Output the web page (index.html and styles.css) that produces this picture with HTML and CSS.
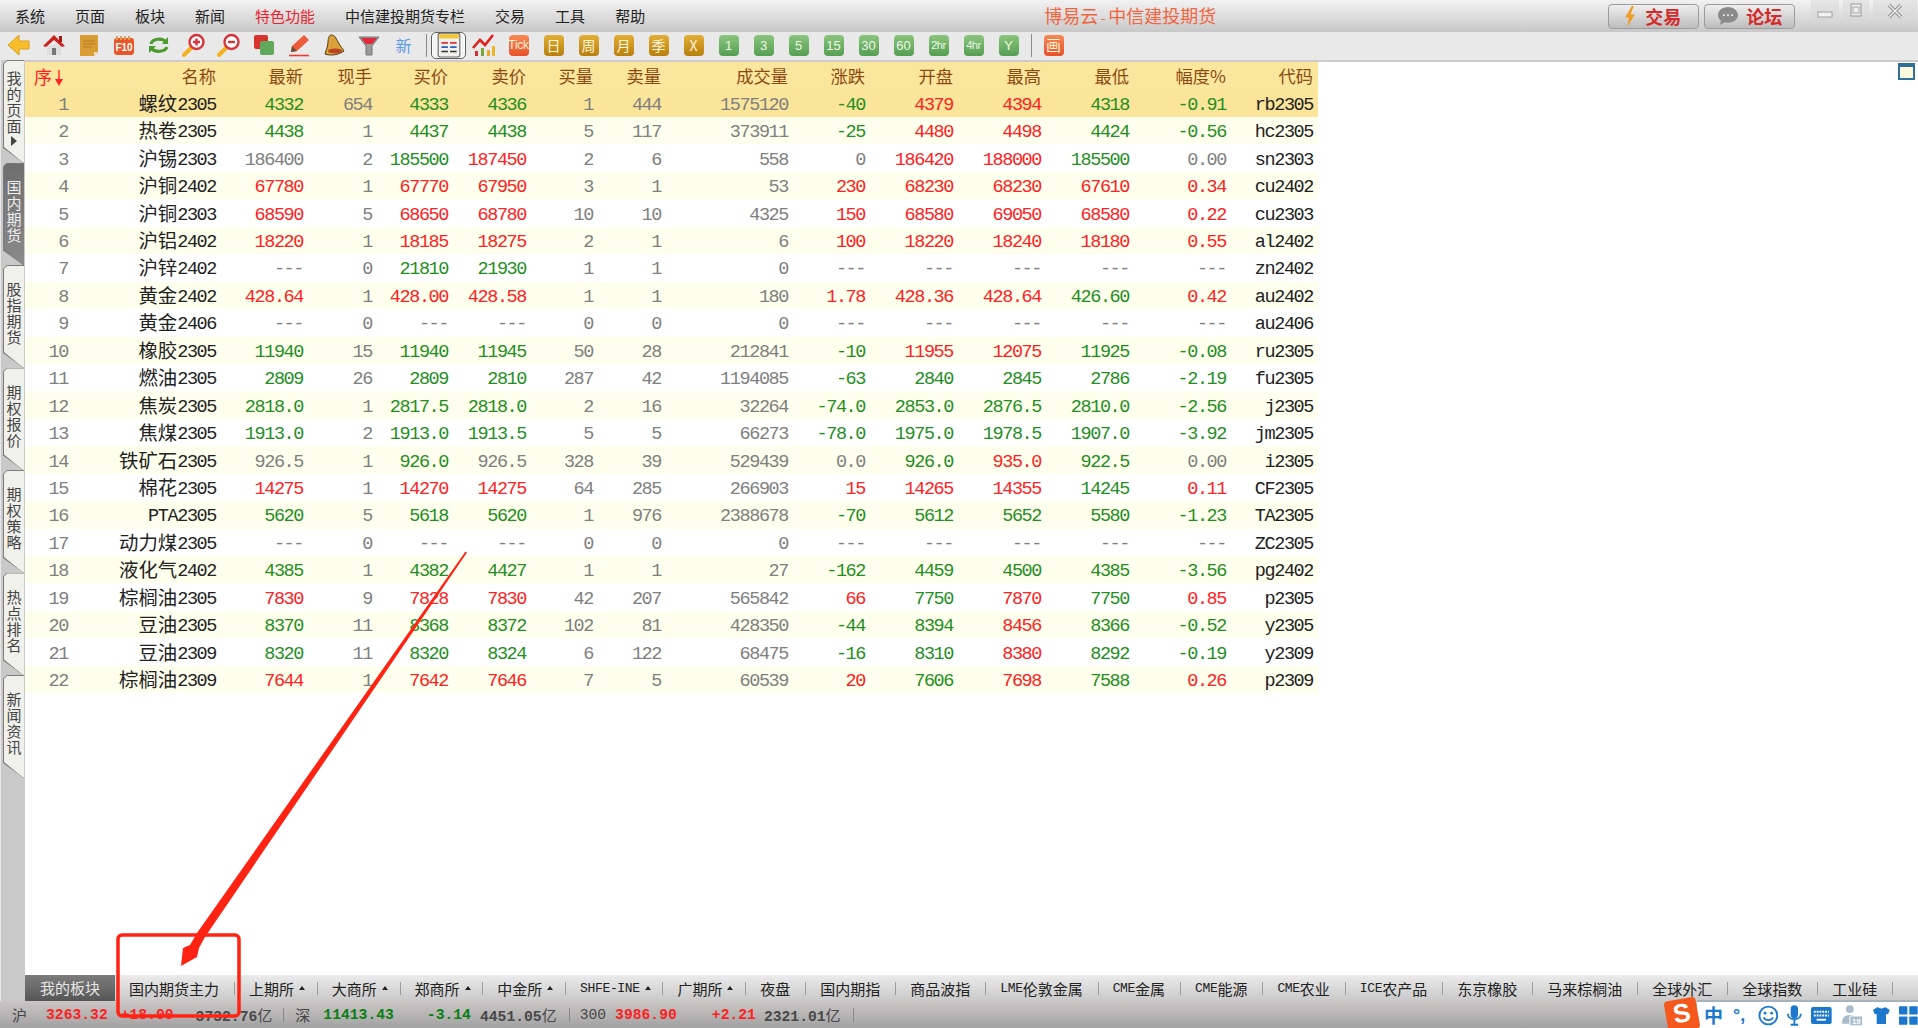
FILE: index.html
```html
<!DOCTYPE html>
<html lang="zh-CN">
<head>
<meta charset="utf-8">
<title>博易云-中信建投期货</title>
<link rel="stylesheet" href="styles.css">
</head>
<body>
<div class="app">
  <header class="titlebar">
    <nav class="menu">
      <span>系统</span><span>页面</span><span>板块</span><span>新闻</span><span class="hot">特色功能</span><span>中信建投期货专栏</span><span>交易</span><span>工具</span><span>帮助</span>
    </nav>
    <div class="apptitle">博易云<i>-</i>中信建投期货</div>
    <div class="topbtns">
      <div class="topbtn">
        <svg class="bolt" viewBox="0 0 12 22"><path d="M8 0 1 12h4l-2 10 8-13H6.500L10 0z" fill="#f09a20"/></svg>
        <span>交易</span>
      </div>
      <div class="topbtn">
        <svg class="bubble" viewBox="0 0 24 22"><path d="M12 1C5.900 1 1 4.900 1 10c0 2.600 1.300 4.800 3.300 6.300L3 21l5.200-3c1.200.3 2.500.5 3.800.5 6.100 0 11-3.900 11-8.500S18.100 1 12 1z" fill="#8a8a8a"/><circle cx="7.500" cy="10" r="1.300" fill="#ddd"/><circle cx="12" cy="10" r="1.300" fill="#ddd"/><circle cx="16.500" cy="10" r="1.300" fill="#ddd"/></svg>
        <span>论坛</span>
      </div>
    </div>
    <div class="winctl">
      <div class="wbtn w-min"><svg viewBox="0 0 16 8" width="16" height="8"><rect x="1" y="1" width="14" height="5" fill="#f2f2f2" stroke="#a0a0a0"/></svg></div>
      <div class="wbtn w-max"><svg viewBox="0 0 12 14" width="12" height="14"><rect x="1" y="1" width="10" height="12" fill="#eee" stroke="#999"/><rect x="3" y="4" width="6" height="6" fill="none" stroke="#aaa"/></svg></div>
      <div class="wbtn w-close"><svg viewBox="0 0 16 16" width="16" height="16"><path d="M2 2l12 12M14 2 2 14" stroke="#8f8f8f" stroke-width="3.400"/><path d="M2 2l12 12M14 2 2 14" stroke="#f2f2f2" stroke-width="1.400"/></svg></div>
    </div>
  </header>

  <div class="toolbar">
    <div class="tool"><svg viewBox="0 0 24 24" width="24" height="24"><path d="M1 12 12 2v6h10v8H12v6z" fill="#f7bd2b" stroke="#dca01c" stroke-linejoin="round"/></svg></div>
    <div class="tool"><svg viewBox="0 0 24 24" width="24" height="24"><path d="M5 12v10h14V12z" fill="#ddd"/><rect x="10" y="15" width="4" height="7" fill="#777"/><path d="M12 2 1 13l3 1 8-7 8 7 3-1z" fill="#c8231f"/><rect x="17" y="3" width="3" height="6" fill="#a81c18"/></svg></div>
    <div class="tool"><svg viewBox="0 0 24 24" width="24" height="24"><path d="M3 2h18v17l-4 4H3z" fill="#d99b33"/><path d="M6 8h12M6 11h12M6 14h9" stroke="#b97d20"/><path d="M21 19h-4v4z" fill="#f0dcae"/></svg></div>
    <div class="tool"><svg viewBox="0 0 24 24" width="24" height="24"><rect x="2" y="5" width="20" height="17" rx="3" fill="#e9562a"/><path d="M5 3v4M9 3v4M13 3v4M17 3v4" stroke="#d9a05a" stroke-width="2"/><text x="12" y="18" class="svgtxt">F10</text></svg></div>
    <div class="tool"><svg viewBox="0 0 24 24" width="24" height="24" fill="none" stroke="#4c9b2c" stroke-width="3.200"><path d="M4 11c1-5 11-7 15-2"/><path d="M20 14c-2 5-12 6-16 1"/><path d="M21 4v7h-6z" fill="#4c9b2c" stroke="none"/><path d="M2 20v-7h7z" fill="#4c9b2c" stroke="none"/></svg></div>
    <div class="tool"><svg viewBox="0 0 24 24" width="24" height="24"><path d="M9 15 2 22" stroke="#f2b31f" stroke-width="4" stroke-linecap="round"/><circle cx="14.500" cy="9" r="7" fill="#fff" stroke="#d8343a" stroke-width="2.400"/><path d="M11 9h7M14.500 5.500v7" stroke="#d8343a" stroke-width="2.400"/></svg></div>
    <div class="tool"><svg viewBox="0 0 24 24" width="24" height="24"><path d="M9 15 2 22" stroke="#f2b31f" stroke-width="4" stroke-linecap="round"/><circle cx="14.500" cy="9" r="7" fill="#fff" stroke="#d8343a" stroke-width="2.400"/><path d="M11 9h7" stroke="#d8343a" stroke-width="2.400"/></svg></div>
    <div class="tool"><svg viewBox="0 0 24 24" width="24" height="24"><rect x="2" y="2" width="14" height="14" rx="2" fill="#d8322c"/><rect x="8" y="8" width="14" height="14" rx="2" fill="#62a85c"/></svg></div>
    <div class="tool"><svg viewBox="0 0 24 24" width="24" height="24"><path d="M17 2l5 5-12 11-6 1 1-6z" fill="#ee5d3a"/><path d="M5 13l5 5-6 1z" fill="#6a4a3a"/><path d="M2 22.500h20" stroke="#e63a32" stroke-width="1.600"/></svg></div>
    <div class="tool"><svg viewBox="0 0 24 24" width="24" height="24"><path d="M9 2c4 0 5 3 7 7s5 7 6 9c-5 4-14 5-19 3 1-4 3-8 3-12 0-3 1-7 3-7z" fill="#d9a13a" stroke="#5a3a1a"/><ellipse cx="13" cy="18" rx="7" ry="2.600" fill="#b9431e"/></svg></div>
    <div class="tool"><svg viewBox="0 0 24 24" width="24" height="24"><path d="M2 4h20l-7 9v9H9v-9z" fill="#9a9a9a" stroke="#777"/><path d="M4 5h16l-5 6H9z" fill="#e2283c"/></svg></div>
    <div class="tool t-new">新</div>
    <div class="tsep"></div>
    <div class="tool tool-on"><svg viewBox="0 0 24 24" width="26" height="26"><rect x="2" y="1" width="20" height="22" rx="2" fill="#f2f0ec" stroke="#666"/><rect x="3" y="2" width="18" height="4" fill="#f2c638"/><path d="M5 10h6M13 10h6" stroke="#d33" stroke-width="1.500"/><path d="M5 14h6M13 14h6" stroke="#2a62b8" stroke-width="1.500"/><path d="M5 18h6M13 18h6" stroke="#333" stroke-width="1.500"/></svg></div>
    <div class="tool"><svg viewBox="0 0 24 24" width="24" height="24"><rect x="3" y="18" width="3" height="5" fill="#c33"/><rect x="9" y="15" width="3" height="8" fill="#7aa83a"/><rect x="15" y="17" width="3" height="6" fill="#e8a92a"/><rect x="20" y="13" width="3" height="10" fill="#e8b92a"/><path d="M1 15 8 7l5 5 8-10" fill="none" stroke="#df2020" stroke-width="2.600"/></svg></div>
    <div class="tool"><b class="ib ib-red">Tick</b></div>
    <div class="tool"><b class="ib ib-gold">日</b></div>
    <div class="tool"><b class="ib ib-gold">周</b></div>
    <div class="tool"><b class="ib ib-gold">月</b></div>
    <div class="tool"><b class="ib ib-gold">季</b></div>
    <div class="tool"><b class="ib ib-gold">X</b></div>
    <div class="tool"><b class="ib ib-green">1</b></div>
    <div class="tool"><b class="ib ib-green">3</b></div>
    <div class="tool"><b class="ib ib-green">5</b></div>
    <div class="tool"><b class="ib ib-green">15</b></div>
    <div class="tool"><b class="ib ib-green">30</b></div>
    <div class="tool"><b class="ib ib-green">60</b></div>
    <div class="tool"><b class="ib ib-green ib-nar">2hr</b></div>
    <div class="tool"><b class="ib ib-green ib-nar">4hr</b></div>
    <div class="tool"><b class="ib ib-green">Y</b></div>
    <div class="tsep"></div>
    <div class="tool"><b class="ib ib-red ib-hua">画</b></div>
  </div>

  <div class="workspace">
    <aside class="side">
      <div class="vtab"><div class="vtab-in"><span>我的页面</span><i class="vtri"></i></div></div>
      <div class="vtab on"><div class="vtab-in"><span>国内期货</span></div></div>
      <div class="vtab"><div class="vtab-in"><span>股指期货</span></div></div>
      <div class="vtab"><div class="vtab-in"><span>期权报价</span></div></div>
      <div class="vtab"><div class="vtab-in"><span>期权策略</span></div></div>
      <div class="vtab"><div class="vtab-in"><span>热点排名</span></div></div>
      <div class="vtab"><div class="vtab-in"><span>新闻资讯</span></div></div>
    </aside>
    <section class="main">
      <div class="gridarea">
        <table class="quotes">
          <colgroup><col class="c1"><col class="c2"><col class="c3"><col class="c4"><col class="c5"><col class="c6"><col class="c7"><col class="c8"><col class="c9"><col class="c10"><col class="c11"><col class="c12"><col class="c13"><col class="c14"><col class="c15"></colgroup>
          <thead>
            <tr><th class="seq">序<svg class="sortarrow" viewBox="0 0 8 16" width="8" height="16"><path d="M4 0v11" stroke="#f22" stroke-width="1.400"/><path d="M0 9h8l-4 7z" fill="#f22"/></svg></th><th>名称</th><th>最新</th><th>现手</th><th>买价</th><th>卖价</th><th>买量</th><th>卖量</th><th>成交量</th><th>涨跌</th><th>开盘</th><th>最高</th><th>最低</th><th>幅度%</th><th class="lastc">代码</th></tr>
          </thead>
          <tbody>
            <tr class="sel"><td>1</td><td class="k"><i>螺纹</i>2305</td><td class="d">4332</td><td>654</td><td class="d">4333</td><td class="d">4336</td><td>1</td><td>444</td><td>1575120</td><td class="d">-40</td><td class="u">4379</td><td class="u">4394</td><td class="d">4318</td><td class="d">-0.91</td><td class="k lastc">rb2305</td></tr>
            <tr><td>2</td><td class="k"><i>热卷</i>2305</td><td class="d">4438</td><td>1</td><td class="d">4437</td><td class="d">4438</td><td>5</td><td>117</td><td>373911</td><td class="d">-25</td><td class="u">4480</td><td class="u">4498</td><td class="d">4424</td><td class="d">-0.56</td><td class="k lastc">hc2305</td></tr>
            <tr><td>3</td><td class="k"><i>沪锡</i>2303</td><td>186400</td><td>2</td><td class="d">185500</td><td class="u">187450</td><td>2</td><td>6</td><td>558</td><td>0</td><td class="u">186420</td><td class="u">188000</td><td class="d">185500</td><td>0.00</td><td class="k lastc">sn2303</td></tr>
            <tr><td>4</td><td class="k"><i>沪铜</i>2402</td><td class="u">67780</td><td>1</td><td class="u">67770</td><td class="u">67950</td><td>3</td><td>1</td><td>53</td><td class="u">230</td><td class="u">68230</td><td class="u">68230</td><td class="u">67610</td><td class="u">0.34</td><td class="k lastc">cu2402</td></tr>
            <tr><td>5</td><td class="k"><i>沪铜</i>2303</td><td class="u">68590</td><td>5</td><td class="u">68650</td><td class="u">68780</td><td>10</td><td>10</td><td>4325</td><td class="u">150</td><td class="u">68580</td><td class="u">69050</td><td class="u">68580</td><td class="u">0.22</td><td class="k lastc">cu2303</td></tr>
            <tr><td>6</td><td class="k"><i>沪铝</i>2402</td><td class="u">18220</td><td>1</td><td class="u">18185</td><td class="u">18275</td><td>2</td><td>1</td><td>6</td><td class="u">100</td><td class="u">18220</td><td class="u">18240</td><td class="u">18180</td><td class="u">0.55</td><td class="k lastc">al2402</td></tr>
            <tr><td>7</td><td class="k"><i>沪锌</i>2402</td><td>---</td><td>0</td><td class="d">21810</td><td class="d">21930</td><td>1</td><td>1</td><td>0</td><td>---</td><td>---</td><td>---</td><td>---</td><td>---</td><td class="k lastc">zn2402</td></tr>
            <tr><td>8</td><td class="k"><i>黄金</i>2402</td><td class="u">428.64</td><td>1</td><td class="u">428.00</td><td class="u">428.58</td><td>1</td><td>1</td><td>180</td><td class="u">1.78</td><td class="u">428.36</td><td class="u">428.64</td><td class="d">426.60</td><td class="u">0.42</td><td class="k lastc">au2402</td></tr>
            <tr><td>9</td><td class="k"><i>黄金</i>2406</td><td>---</td><td>0</td><td>---</td><td>---</td><td>0</td><td>0</td><td>0</td><td>---</td><td>---</td><td>---</td><td>---</td><td>---</td><td class="k lastc">au2406</td></tr>
            <tr><td>10</td><td class="k"><i>橡胶</i>2305</td><td class="d">11940</td><td>15</td><td class="d">11940</td><td class="d">11945</td><td>50</td><td>28</td><td>212841</td><td class="d">-10</td><td class="u">11955</td><td class="u">12075</td><td class="d">11925</td><td class="d">-0.08</td><td class="k lastc">ru2305</td></tr>
            <tr><td>11</td><td class="k"><i>燃油</i>2305</td><td class="d">2809</td><td>26</td><td class="d">2809</td><td class="d">2810</td><td>287</td><td>42</td><td>1194085</td><td class="d">-63</td><td class="d">2840</td><td class="d">2845</td><td class="d">2786</td><td class="d">-2.19</td><td class="k lastc">fu2305</td></tr>
            <tr><td>12</td><td class="k"><i>焦炭</i>2305</td><td class="d">2818.0</td><td>1</td><td class="d">2817.5</td><td class="d">2818.0</td><td>2</td><td>16</td><td>32264</td><td class="d">-74.0</td><td class="d">2853.0</td><td class="d">2876.5</td><td class="d">2810.0</td><td class="d">-2.56</td><td class="k lastc">j2305</td></tr>
            <tr><td>13</td><td class="k"><i>焦煤</i>2305</td><td class="d">1913.0</td><td>2</td><td class="d">1913.0</td><td class="d">1913.5</td><td>5</td><td>5</td><td>66273</td><td class="d">-78.0</td><td class="d">1975.0</td><td class="d">1978.5</td><td class="d">1907.0</td><td class="d">-3.92</td><td class="k lastc">jm2305</td></tr>
            <tr><td>14</td><td class="k"><i>铁矿石</i>2305</td><td>926.5</td><td>1</td><td class="d">926.0</td><td>926.5</td><td>328</td><td>39</td><td>529439</td><td>0.0</td><td class="d">926.0</td><td class="u">935.0</td><td class="d">922.5</td><td>0.00</td><td class="k lastc">i2305</td></tr>
            <tr><td>15</td><td class="k"><i>棉花</i>2305</td><td class="u">14275</td><td>1</td><td class="u">14270</td><td class="u">14275</td><td>64</td><td>285</td><td>266903</td><td class="u">15</td><td class="u">14265</td><td class="u">14355</td><td class="d">14245</td><td class="u">0.11</td><td class="k lastc">CF2305</td></tr>
            <tr><td>16</td><td class="k">PTA2305</td><td class="d">5620</td><td>5</td><td class="d">5618</td><td class="d">5620</td><td>1</td><td>976</td><td>2388678</td><td class="d">-70</td><td class="d">5612</td><td class="d">5652</td><td class="d">5580</td><td class="d">-1.23</td><td class="k lastc">TA2305</td></tr>
            <tr><td>17</td><td class="k"><i>动力煤</i>2305</td><td>---</td><td>0</td><td>---</td><td>---</td><td>0</td><td>0</td><td>0</td><td>---</td><td>---</td><td>---</td><td>---</td><td>---</td><td class="k lastc">ZC2305</td></tr>
            <tr><td>18</td><td class="k"><i>液化气</i>2402</td><td class="d">4385</td><td>1</td><td class="d">4382</td><td class="d">4427</td><td>1</td><td>1</td><td>27</td><td class="d">-162</td><td class="d">4459</td><td class="d">4500</td><td class="d">4385</td><td class="d">-3.56</td><td class="k lastc">pg2402</td></tr>
            <tr><td>19</td><td class="k"><i>棕榈油</i>2305</td><td class="u">7830</td><td>9</td><td class="u">7828</td><td class="u">7830</td><td>42</td><td>207</td><td>565842</td><td class="u">66</td><td class="d">7750</td><td class="u">7870</td><td class="d">7750</td><td class="u">0.85</td><td class="k lastc">p2305</td></tr>
            <tr><td>20</td><td class="k"><i>豆油</i>2305</td><td class="d">8370</td><td>11</td><td class="d">8368</td><td class="d">8372</td><td>102</td><td>81</td><td>428350</td><td class="d">-44</td><td class="d">8394</td><td class="u">8456</td><td class="d">8366</td><td class="d">-0.52</td><td class="k lastc">y2305</td></tr>
            <tr><td>21</td><td class="k"><i>豆油</i>2309</td><td class="d">8320</td><td>11</td><td class="d">8320</td><td class="d">8324</td><td>6</td><td>122</td><td>68475</td><td class="d">-16</td><td class="d">8310</td><td class="u">8380</td><td class="d">8292</td><td class="d">-0.19</td><td class="k lastc">y2309</td></tr>
            <tr><td>22</td><td class="k"><i>棕榈油</i>2309</td><td class="u">7644</td><td>1</td><td class="u">7642</td><td class="u">7646</td><td>7</td><td>5</td><td>60539</td><td class="u">20</td><td class="d">7606</td><td class="u">7698</td><td class="d">7588</td><td class="u">0.26</td><td class="k lastc">p2309</td></tr>
          </tbody>
        </table>
        <div class="restore"></div>
      </div>
      <nav class="sheets">
        <div class="sheet-my">我的板块</div>
        <div class="sheet">国内期货主力</div>
        <div class="sheet tri">上期所</div>
        <div class="sheet tri">大商所</div>
        <div class="sheet tri">郑商所</div>
        <div class="sheet tri">中金所</div>
        <div class="sheet tri"><em>SHFE-INE</em></div>
        <div class="sheet tri">广期所</div>
        <div class="sheet">夜盘</div>
        <div class="sheet">国内期指</div>
        <div class="sheet">商品波指</div>
        <div class="sheet"><em>LME</em>伦敦金属</div>
        <div class="sheet"><em>CME</em>金属</div>
        <div class="sheet"><em>CME</em>能源</div>
        <div class="sheet"><em>CME</em>农业</div>
        <div class="sheet"><em>ICE</em>农产品</div>
        <div class="sheet">东京橡胶</div>
        <div class="sheet">马来棕榈油</div>
        <div class="sheet">全球外汇</div>
        <div class="sheet">全球指数</div>
        <div class="sheet">工业硅</div>
      </nav>
    </section>
  </div>

  <footer class="status">
    <span class="ix cn">沪</span>
    <span class="u m19">3263.32</span>
    <span class="u m13">+18.00</span>
    <span class="g m22">3732.76<i>亿</i></span>
    <b class="ssep m11"></b>
    <span class="ix cn m11">深</span>
    <span class="dg m13">11413.43</span>
    <span class="dg m33">-3.14</span>
    <span class="g m9">4451.05<i>亿</i></span>
    <b class="ssep m12"></b>
    <span class="g m10 plain">300</span>
    <span class="u m9">3986.90</span>
    <span class="u m35">+2.21</span>
    <span class="g m8">2321.01<i>亿</i></span>
    <b class="ssep m12"></b>
  </footer>

  <div class="ime">
    <div class="ime-logo">S</div>
    <span class="ime-zh">中</span>
    <span class="ime-punc">°,</span>
    <svg viewBox="0 0 22 22" width="21" height="21"><circle cx="11" cy="11" r="9.500" fill="#fff" stroke="#1b78cc" stroke-width="2"/><circle cx="7.500" cy="8.500" r="1.500" fill="#1b78cc"/><circle cx="14.500" cy="8.500" r="1.500" fill="#1b78cc"/><path d="M6 13c2 4 8 4 10 0" fill="none" stroke="#1b78cc" stroke-width="1.800"/></svg>
    <svg viewBox="0 0 16 22" width="15" height="21"><rect x="4" y="0" width="8" height="14" rx="4" fill="#1b78cc"/><path d="M1 9c0 8 14 8 14 0M8 15v5M4 21h8" fill="none" stroke="#1b78cc" stroke-width="2"/></svg>
    <svg viewBox="0 0 22 18" width="21" height="17"><rect width="22" height="18" rx="2" fill="#1b78cc"/><path d="M3 5h16M3 9h16" stroke="#fff" stroke-width="2" stroke-dasharray="2 1"/><path d="M6 13.500h10" stroke="#fff" stroke-width="2"/></svg>
    <svg viewBox="0 0 22 22" width="22" height="22"><circle cx="9" cy="5" r="4" fill="#a9bccb"/><path d="M1 20c0-7 3-9 8-9s8 2 8 9z" fill="#a9bccb"/><rect x="9" y="12" width="13" height="10" rx="1" fill="#a9bccb" stroke="#fff"/><text x="15.500" y="20.500" class="svgnum">19</text></svg>
    <svg viewBox="0 0 20 20" width="19" height="19"><path d="M6 1 1 4l2 5 2-1v11h10V8l2 1 2-5-5-3c-1 2-7 2-8 0z" fill="#1b78cc"/></svg>
    <svg viewBox="0 0 20 20" width="19" height="19" fill="#1b78cc"><rect width="9" height="9" rx="1"/><rect x="11" width="9" height="9" rx="1"/><rect y="11" width="9" height="9" rx="1"/><rect x="11" y="11" width="9" height="9" rx="1"/></svg>
  </div>

  <svg class="annot" viewBox="0 0 1918 1028" width="1918" height="1028">
    <rect x="118" y="935" width="121" height="81" rx="4" fill="none" stroke="#ff2313" stroke-width="3.500"/>
    <path d="M465.500 551.500 467 552.500 205 937 199 948 197 957 181 966 183 948 190 945 197 933z" fill="#ff2313"/>
  </svg>
</div>
</body>
</html>
```
FILE: styles.css
```css
* { box-sizing: border-box; }
html, body { margin: 0; padding: 0; background: #fff; }
body { font-family: "Noto Sans CJK SC", "Liberation Sans", sans-serif; }
i, em { font-style: normal; }

.app {
  position: relative;
  width: 1918px;
  height: 1028px;
  overflow: hidden;
  display: flex;
  flex-direction: column;
}

/* title bar */
.titlebar {
  height: 32px;
  flex: none;
  display: flex;
  align-items: center;
  padding-left: 15px;
  background: linear-gradient(#f2f2f2, #e8e8e8 25%, #c8c8c8);
}
.menu { display: flex; gap: 30px; font-size: 15px; color: #222; line-height: 32px; }
.menu .hot { color: #f0202a; }
.apptitle {
  margin-left: 399px;
  font-size: 18px;
  color: #f2653e;
  line-height: 32px;
  white-space: nowrap;
}
.apptitle i { display: inline-block; width: 10px; text-align: center; font-size: 14px; }
.topbtns { margin-left: 392px; display: flex; gap: 5px; }
.topbtn {
  width: 91px;
  height: 25px;
  border: 1px solid #9c9c9c;
  border-radius: 4px;
  background: linear-gradient(#efefef, #bdbdbd);
  display: flex;
  align-items: center;
  gap: 9px;
  padding-left: 15px;
  font-size: 18px;
  font-weight: 700;
  line-height: 23px;
  color: #d42a2a;
}
.bolt { width: 12px; height: 21px; }
.bubble { width: 22px; height: 20px; flex: none; margin-left: -3px; margin-right: -2px; }
.winctl { margin-left: 16px; display: flex; align-self: flex-start; height: 24px; gap: 4px; }
.wbtn { display: flex; justify-content: center; background: linear-gradient(#e6e6e6, #d4d4d4); }
.w-min { width: 28px; padding-top: 11px; }
.w-max { width: 26px; padding-top: 3px; }
.w-close { width: 44px; padding-top: 3px; }

/* toolbar */
.toolbar {
  height: 30px;
  flex: none;
  display: flex;
  align-items: center;
  padding: 0 0 2px 1px;
  background: #e9e9e9;
  border-bottom: 2px solid #cfcbcd;
}
.tool { width: 35px; height: 27px; flex: none; display: flex; align-items: center; justify-content: center; }
.t-new { color: #5a9ae6; font-size: 16px; }
.tsep { width: 10px; flex: none; height: 23px; display: flex; justify-content: center; }
.tsep::before { content: ""; width: 1px; background: #8a8a8a; }
.tool-on { border: 1px solid #5e5e5e; border-radius: 5px; background: #f5f5f5; box-shadow: inset 0 0 0 1px #fff; }
.ib {
  width: 20px;
  height: 21px;
  border-radius: 4px;
  display: flex;
  align-items: center;
  justify-content: center;
  font-weight: 400;
  font-size: 14px;
  line-height: 21px;
  color: #fff3d8;
  white-space: nowrap;
}
.ib-gold { background: linear-gradient(#e2ae34, #b8800e); }
.ib-green { background: linear-gradient(#8cc57e, #549e52); color: #eef8e8; font-family: "Liberation Sans", sans-serif; font-size: 13px; }
.ib-nar { font-size: 11px; letter-spacing: -.4px; }
.ib-red { background: linear-gradient(#f58a55, #e9502a); font-family: "Liberation Sans", "Noto Sans CJK SC", sans-serif; font-size: 12px; letter-spacing: -.3px; }
.ib-hua { font-size: 15px; letter-spacing: 0; }

/* workspace */
.workspace { flex: 1; min-height: 0; display: flex; }
.side {
  position: relative;
  width: 25px;
  flex: none;
  margin-top: -2px;
  background: #c9c9c9;
  border-left: 1px solid #e8e8e8;
  display: flex;
  flex-direction: column;
  padding: 0 0 0 2px;
}
.vtab {
  width: 21px;
  height: 102.500px;
  flex: none;
  background: #7c7c7c;
  clip-path: polygon(4px 0, 100% 0, 100% 100%, 20px 100%, 0 88px, 0 4px);
}
.vtab-in {
  height: 100%;
  margin-left: 1px;
  padding-top: 17px;
  background: #f1f1ec;
  clip-path: polygon(3px 1px, 100% 1px, 100% 100%, 19px 100%, 0 87px, 0 4px);
  display: flex;
  flex-direction: column;
  align-items: center;
  color: #444;
  font-size: 15px;
}
.vtab:first-child .vtab-in { padding-top: 11px; }
.vtab span { writing-mode: vertical-rl; letter-spacing: 1px; line-height: 19px; }
.vtab.on .vtab-in { background: linear-gradient(#6e6e6e, #8a8a8a); color: #eee; }
.vtri { width: 0; height: 0; border-left: 6px solid #444; border-top: 5px solid transparent; border-bottom: 5px solid transparent; margin-top: 1px; }

.main { flex: 1; min-width: 0; display: flex; flex-direction: column; }
.gridarea { flex: 1; min-height: 0; position: relative; background: #fff; }

.quotes {
  table-layout: fixed;
  width: 1293px;
  border-collapse: collapse;
  font-family: "Liberation Mono", "Noto Sans CJK SC", monospace;
  font-size: 18.500px;
  letter-spacing: -1.400px;
  color: #7f7f7f;
}
.quotes th, .quotes td { padding: 0; text-align: right; white-space: nowrap; }
.quotes th {
  height: 27.600px;
  line-height: 20px;
  font-family: "Noto Sans CJK SC", sans-serif;
  font-size: 17.300px;
  font-weight: 400;
  letter-spacing: 0;
  color: #8b4a12;
  background: #fbe69e;
}
.quotes td { height: 27.440px; line-height: 20px; padding-top: 5px; vertical-align: middle; }
.quotes tbody tr:nth-child(even) td { background: #ffffee; }
.quotes tbody tr.sel td { background: #fbe59b; }
.quotes i { font-family: "Noto Sans CJK SC", sans-serif; font-size: 19.400px; letter-spacing: 0; line-height: 0; vertical-align: -1px; }
.quotes .seq { color: #f22; text-align: left; padding-left: 9px; font-size: 18px; }
.sortarrow { margin-left: 3px; vertical-align: -2px; }
.quotes .lastc { padding-right: 5px; }
.c1 { width: 43px; } .c2 { width: 148px; } .c3 { width: 87px; } .c4 { width: 69px; } .c5 { width: 76px; }
.c6 { width: 78px; } .c7 { width: 67px; } .c8 { width: 68px; } .c9 { width: 127px; } .c10 { width: 77px; }
.c11 { width: 88px; } .c12 { width: 88px; } .c13 { width: 88px; } .c14 { width: 97px; } .c15 { width: 92px; }
.quotes .k { color: #222; }
.quotes .u { color: #ff2222; }
.quotes .d { color: #1f8f1f; }

.restore {
  position: absolute;
  right: 3px;
  top: 1px;
  width: 17px;
  height: 17px;
  border: 2px solid #2e7199;
  border-top-width: 4px;
  background: #fdf8dc;
}

/* sheet tabs */
.sheets {
  height: 26px;
  flex: none;
  display: flex;
  align-items: center;
  background: linear-gradient(#ebebeb, #c9c9c9);
  font-size: 15px;
  color: #222;
  white-space: nowrap;
}
.sheet-my {
  width: 90px;
  height: 26px;
  line-height: 26px;
  text-align: center;
  background: linear-gradient(#7c7c7c, #565656);
  color: #e6e6e6;
}
.sheet {
  height: 13px;
  line-height: 13px;
  padding: 0 15px 0 14px;
  border-right: 1px solid #9a9a9a;
  display: flex;
  align-items: center;
}
.sheet em { font-family: "Liberation Mono", monospace; font-size: 13px; letter-spacing: -.35px; }
.sheet.tri { padding-right: 11.750px; }
.sheet.tri::after {
  content: "";
  margin-left: 5px;
  border-left: 3.500px solid transparent;
  border-right: 3.500px solid transparent;
  border-bottom: 4px solid #222;
}

/* status bar */
.status {
  height: 27px;
  flex: none;
  display: flex;
  align-items: center;
  padding-left: 12px;
  background: linear-gradient(#cbc6c6, #a2a2a2);
  font-family: "Liberation Mono", "Noto Sans CJK SC", monospace;
  font-weight: 700;
  font-size: 14.700px;
  white-space: nowrap;
}
.status i { font-family: "Noto Sans CJK SC", sans-serif; font-size: 15px; font-weight: 400; }
.status .ix { color: #444; font-weight: 400; font-family: "Noto Sans CJK SC", sans-serif; font-size: 15px; }
.status .u { color: #ff2020; }
.status .dg { color: #0a7f12; }
.status .g { color: #484848; }
.status .plain { font-weight: 400; }
.ssep { width: 1px; height: 14px; background: #8a8a8a; }
.m8 { margin-left: 8px; } .m9 { margin-left: 9px; } .m10 { margin-left: 10px; } .m11 { margin-left: 11px; }
.m12 { margin-left: 12px; } .m13 { margin-left: 13px; } .m19 { margin-left: 19px; } .m22 { margin-left: 22px; }
.m33 { margin-left: 33px; } .m35 { margin-left: 35px; }

/* IME bar floats over the status bar */
.ime {
  position: absolute;
  right: 0;
  bottom: 0;
  width: 221px;
  height: 28px;
  background: #fff;
  border-top: 2px solid #a5b3bf;
  display: flex;
  align-items: center;
  padding-left: 7px;
  gap: 9px;
}
.ime-logo {
  position: absolute;
  left: -31px;
  top: -3px;
  width: 32px;
  height: 32px;
  border-radius: 4px;
  background: #f4581c;
  transform: rotate(-10deg);
  color: #fff;
  font: 700 26px/28px "Liberation Sans", sans-serif;
  text-align: center;
}
.ime-zh { color: #1b78cc; font-size: 19px; font-weight: 700; line-height: 24px; margin-right: 1px; }
.ime-punc { color: #1b78cc; font: 700 18px/20px "Liberation Sans", sans-serif; width: 15px; margin-right: 1px; }
.svgtxt { font: 700 10px "Liberation Sans", sans-serif; fill: #fff; text-anchor: middle; }
.svgnum { font: 700 8px "Liberation Sans", sans-serif; fill: #fff; text-anchor: middle; }

/* red annotation drawn over the screenshot */
.annot { position: absolute; left: 0; top: 0; pointer-events: none; }
```
